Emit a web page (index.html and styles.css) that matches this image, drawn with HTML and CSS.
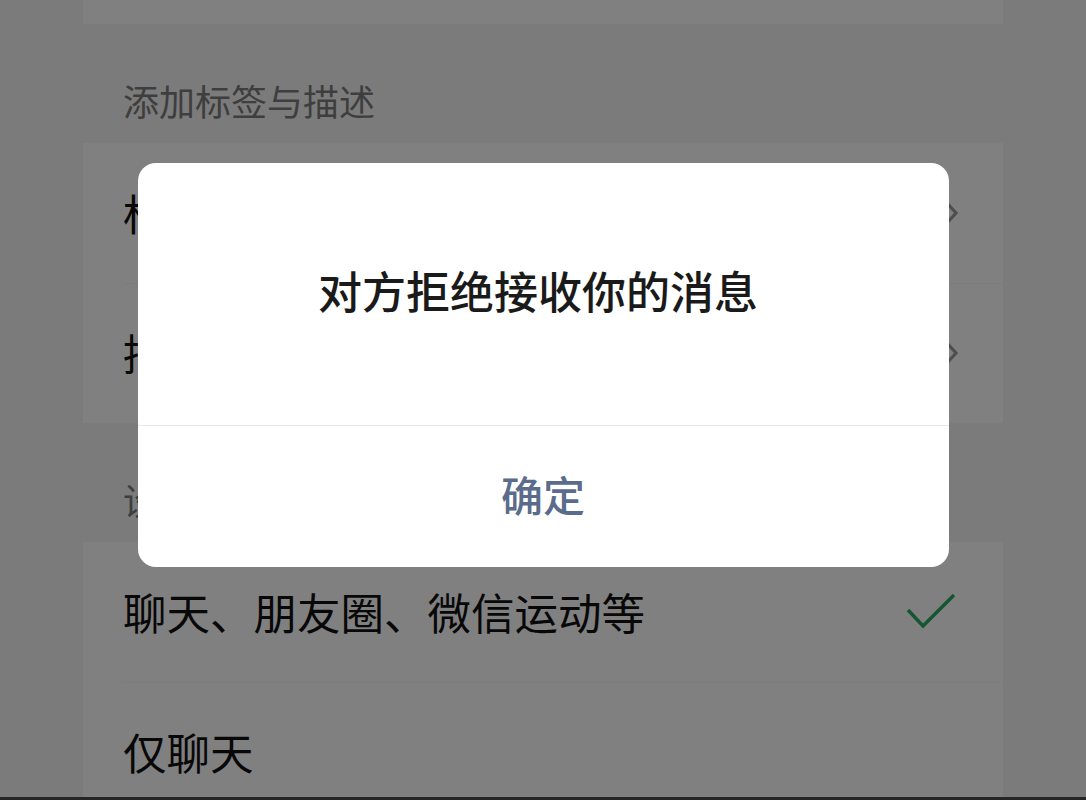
FILE: index.html
```html
<!DOCTYPE html>
<html lang="zh-CN">
<head>
    <meta charset="UTF-8">
    <meta name="viewport" content="width=device-width, initial-scale=1.0">
    <title>朋友权限</title>
    <link rel="stylesheet" href="styles.css">
</head>
<body>
    <div class="screen">
        <div class="page">
            <div class="card card-stub"></div>

            <div class="section-title">添加标签与描述</div>
            <div class="card">
                <div class="row">
                    <span class="row-label">标签</span>
                    <svg class="chevron" viewBox="0 0 14 26" width="14" height="26">
                        <path d="M2 2 L12 13 L2 24" fill="none" stroke="#9a9a9a" stroke-width="3.2"/>
                    </svg>
                </div>
                <div class="row">
                    <span class="row-label">描述</span>
                    <svg class="chevron" viewBox="0 0 14 26" width="14" height="26">
                        <path d="M2 2 L12 13 L2 24" fill="none" stroke="#9a9a9a" stroke-width="3.2"/>
                    </svg>
                </div>
            </div>

            <div class="section-title">设置朋友权限</div>
            <div class="card">
                <div class="row">
                    <span class="row-label">聊天、朋友圈、微信运动等</span>
                    <svg class="check" viewBox="0 0 54 40" width="54" height="40">
                        <path d="M4 20 L19 36 L50 5" fill="none" stroke="#2aa865" stroke-width="3.5"/>
                    </svg>
                </div>
                <div class="row">
                    <span class="row-label">仅聊天</span>
                </div>
            </div>
        </div>

        <!-- dim layer + alert -->
        <div class="mask">
            <div class="dialog">
                <div class="dialog-body">
                    <span class="dialog-title">对方拒绝接收你的消息</span>
                </div>
                <div class="dialog-footer">
                    <a class="dialog-btn" href="#">确定</a>
                </div>
            </div>
        </div>
    </div>
</body>
</html>
```

FILE: styles.css
```css
* {
    box-sizing: border-box;
}

body {
    margin: 0;
    padding: 0;
    font-family: "Noto Sans CJK SC", "Noto Sans", sans-serif;
    background-color: #111111;
}

.screen {
    position: relative;
    width: 1086px;
    height: 800px;
    overflow: hidden;
    background-color: #f2f2f2;
    border-bottom: 3px solid #262626;
}

.page {
    padding: 0 83px;
}

.card {
    background-color: #fcfcfc;
}

.card-stub {
    height: 24px;
}

.section-title {
    padding: 54px 40px 21px;
    font-size: 36px;
    line-height: 44px;
    color: #7a7a7a;
}

.row {
    display: flex;
    align-items: center;
    justify-content: space-between;
    height: 140px;
    padding: 0 45px 0 40px;
    position: relative;
}

.row + .row::before {
    content: "";
    position: absolute;
    top: 0;
    left: 40px;
    right: 0;
    height: 1px;
    background-color: #f4f4f4;
}

.row-label {
    font-size: 43.5px;
    line-height: 50px;
    color: #111111;
}

.chevron {
    display: block;
}

.check {
    display: block;
    margin-top: -4px;
}

.mask {
    position: absolute;
    top: 0;
    left: 0;
    right: 0;
    bottom: 0;
    background-color: rgba(0, 0, 0, 0.49);
    display: flex;
    justify-content: center;
    align-items: flex-start;
    padding-top: 163px;
}

.dialog {
    width: 811px;
    background-color: #ffffff;
    border-radius: 18px;
    overflow: hidden;
}

.dialog-body {
    height: 263px;
    display: flex;
    align-items: center;
    justify-content: center;
    padding-bottom: 8px;
    border-bottom: 1px solid #e8e8e8;
}

.dialog-title {
    font-size: 44px;
    font-weight: 500;
    color: #1a1a1a;
    margin-left: -10px;
}

.dialog-footer {
    height: 141px;
    display: flex;
    align-items: center;
    justify-content: center;
    padding-bottom: 6px;
}

.dialog-btn {
    font-size: 42px;
    font-weight: 500;
    color: #5a6b8c;
    text-decoration: none;
}
```
